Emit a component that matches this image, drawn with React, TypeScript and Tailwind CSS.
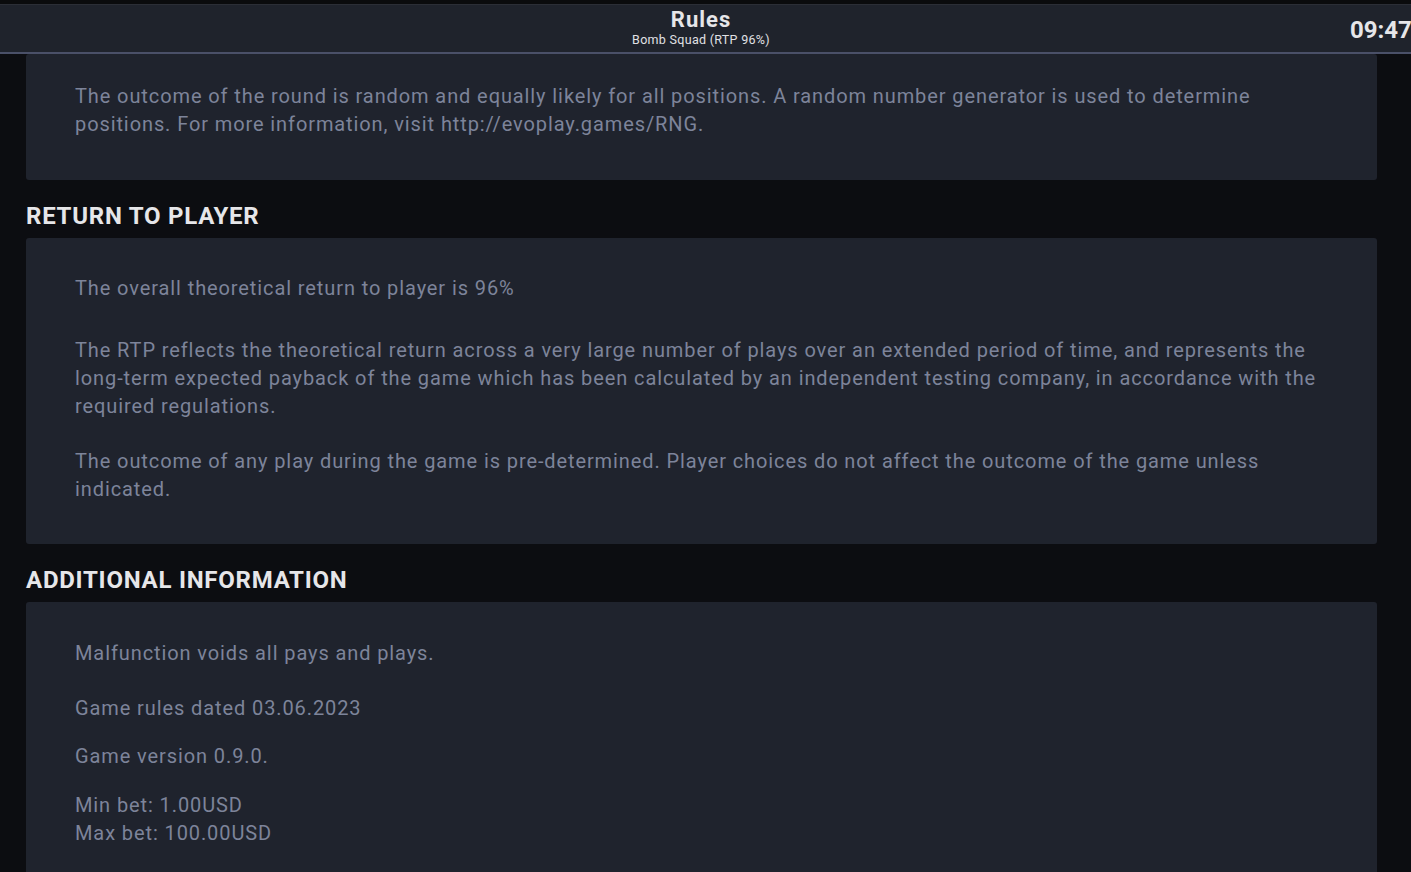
import React from "react";

const font = { fontFamily: "Roboto, 'Noto Sans', sans-serif" };

function Card({ children, className = "" }: { children: React.ReactNode; className?: string }) {
  return (
    <div className={"rounded-[3px] bg-[#1f232d] px-[49px] text-[20px] leading-[28px] tracking-[0.9px] text-[#7d849a] " + className}>
      {children}
    </div>
  );
}

function Heading({ children }: { children: React.ReactNode }) {
  return (
    <h2 className="pt-[22px] pb-[8px] text-[24px] leading-[28px] tracking-[0.75px] font-bold uppercase text-[#e6e6e9]">
      {children}
    </h2>
  );
}

export default function App() {
  return (
    <div style={font} className="h-[872px] w-[1411px] overflow-hidden bg-[#0c0d11] flex flex-col">
      <div className="h-[4px] bg-[#0a0b0d]" />
      <header className="relative h-[50px] shrink-0 border-t border-[#2b2e36] border-b-2 border-b-[#4a5068] bg-[#1f232c] flex justify-center">
        <div className="mr-[9px] flex flex-col items-center pt-[2px]">
          <div className="text-[22px] leading-[26px] tracking-[1px] font-bold text-[#e6e6e9]">Rules</div>
          <div className="text-[12.5px] leading-[14px] tracking-[0.3px] text-[#e0e0e4]">Bomb Squad (RTP 96%)</div>
        </div>
        <div className="absolute left-[1350px] top-[11px] text-[24px] leading-[28px] font-bold text-[#e6e6e9] whitespace-nowrap">
          09:47
        </div>
      </header>
      <main className="flex-1 overflow-hidden pl-[26px] pr-[34px]">
        <Card className="pt-[28px] pb-[42px]">
          <p>
            The outcome of the round is random and equally likely for all positions. A random number generator is used to determine positions. For more information, visit http://evoplay.games/RNG.
          </p>
        </Card>
        <Heading>Return to player</Heading>
        <Card className="pt-[36px] pb-[41px]">
          <p>The overall theoretical return to player is 96%</p>
          <p className="mt-[34px]">
            The RTP reflects the theoretical return across a very large number of plays over an extended period of time, and represents the long-term expected payback of the game which has been calculated by an independent testing company, in accordance with the required regulations.
          </p>
          <p className="mt-[27px]">
            The outcome of any play during the game is pre-determined. Player choices do not affect the outcome of the game unless indicated.
          </p>
        </Card>
        <Heading>Additional information</Heading>
        <Card className="pt-[37px] pb-[40px]">
          <p>Malfunction voids all pays and plays.</p>
          <p className="mt-[27px]">Game rules dated 03.06.2023</p>
          <p className="mt-[20px]">Game version 0.9.0.</p>
          <p className="mt-[21px]">
            Min bet: 1.00USD
            <br />
            Max bet: 100.00USD
          </p>
        </Card>
      </main>
    </div>
  );
}
